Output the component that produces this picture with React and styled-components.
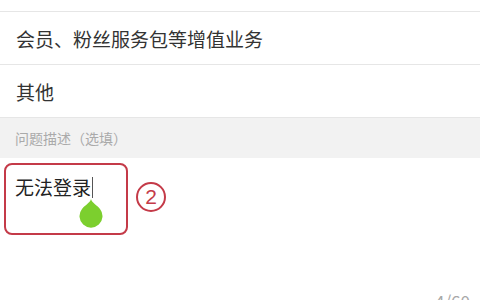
import React from "react";
import styled, { createGlobalStyle } from "styled-components";

const GlobalStyle = createGlobalStyle`
  html, body {
    margin: 0;
    padding: 0;
    background: #ffffff;
    font-family: "Noto Sans CJK SC", "Noto Sans", sans-serif;
  }
  #root {
    width: 480px;
    height: 300px;
    overflow: hidden;
  }
`;

const Page = styled.div`
  width: 480px;
  height: 300px;
  overflow: hidden;
  background: #fff;
`;

const TopStrip = styled.div`
  height: 11px;
  border-bottom: 1px solid #e6e6e6;
`;

const OptionRow = styled.div`
  height: 52px;
  display: flex;
  align-items: center;
  padding-left: 16px;
  border-bottom: 1px solid #e6e6e6;
  font-size: 19px;
  color: #333;
`;

const SectionHeader = styled.div`
  height: 40px;
  display: flex;
  align-items: center;
  padding-left: 15px;
  background: #f2f2f2;
  font-size: 14px;
  color: #aaa;
`;

const InputArea = styled.div`
  position: relative;
  box-sizing: border-box;
  height: 142px;
  padding: 16px 10px 0 15px;
  display: flex;
  flex-direction: column;
`;

const InputText = styled.div`
  font-size: 19px;
  line-height: 26px;
  color: #222;
  display: flex;
  align-items: center;
`;

const Caret = styled.span`
  width: 1px;
  height: 21px;
  background: #555;
  margin-left: 1px;
`;

const Counter = styled.div`
  margin-top: auto;
  margin-bottom: -12px;
  align-self: flex-end;
  font-size: 17px;
  color: #a8a8a8;
  line-height: 22px;
`;

const HighlightBox = styled.div`
  position: absolute;
  left: 4px;
  top: 5px;
  width: 120px;
  height: 68px;
  border: 2px solid #c43a48;
  border-radius: 8px;
`;

const StepBadge = styled.div`
  position: absolute;
  left: 136px;
  top: 24px;
  width: 26px;
  height: 26px;
  border: 2px solid #c43a48;
  border-radius: 50%;
  color: #c43a48;
  font-family: "Liberation Sans", sans-serif;
  font-size: 21px;
  line-height: 26px;
  text-align: center;
`;

const Drop = styled.svg`
  position: absolute;
  left: 78px;
  top: 40px;
`;

export default function App() {
  return (
    <Page>
      <GlobalStyle />
      <TopStrip />
      <OptionRow>会员、粉丝服务包等增值业务</OptionRow>
      <OptionRow>其他</OptionRow>
      <SectionHeader>问题描述（选填）</SectionHeader>
      <InputArea>
        <InputText>
          无法登录
          <Caret />
        </InputText>
        <Counter>4/60</Counter>
        <HighlightBox />
        <StepBadge>2</StepBadge>
        <Drop width="26" height="30" viewBox="0 0 26 30">
          <path
            d="M13 1 C14 5 19 7 22 11 A11.5 11.5 0 1 1 4 11 C7 7 12 5 13 1 Z"
            fill="#7ccf2e"
          />
        </Drop>
      </InputArea>
    </Page>
  );
}
